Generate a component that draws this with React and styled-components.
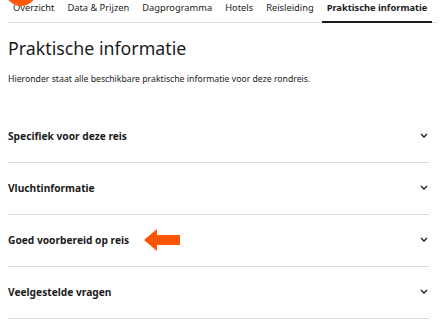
import React from "react";
import styled, { createGlobalStyle } from "styled-components";

const Global = createGlobalStyle`
  html, body { margin: 0; padding: 0; background: #fff; }
  body { font-family: "Noto Sans", "Open Sans", sans-serif; color: #1b1b1b; overflow: hidden; }
`;

const Page = styled.div`
  position: relative;
  width: 445px;
  height: 326px;
  padding: 0 8px;
  box-sizing: border-box;
  overflow: hidden;
`;

const Badge = styled.div`
  position: absolute;
  left: 5px;
  top: -26px;
  width: 32px;
  height: 32px;
  border-radius: 50%;
  background: #ff5a0a;
`;

const Tabs = styled.nav`
  display: flex;
  align-items: flex-end;
  gap: 3px;
  height: 23px;
  border-bottom: 1px solid #dcdcdc;
  box-sizing: border-box;
`;

const Tab = styled.div`
  padding: 0 5px 7px;
  font-size: 9.3px;
  line-height: 13px;
  font-weight: ${(p) => (p.$active ? 700 : 400)};
  color: #1b1b1b;
  white-space: nowrap;
  border-bottom: 2px solid ${(p) => (p.$active ? "#1b1b1b" : "transparent")};
  margin-bottom: -1px;
`;

const Title = styled.h1`
  margin: 13px 0 0;
  font-size: 17.8px;
  line-height: 24px;
  font-weight: 400;
`;

const Intro = styled.p`
  margin: 13px 0 0;
  font-size: 8.7px;
  line-height: 12px;
`;

const List = styled.div`
  margin-top: 26px;
  margin-right: 8px;
`;

const Row = styled.div`
  display: flex;
  align-items: center;
  height: 52px;
  padding-bottom: 2px;
  border-bottom: 1px solid #dcdcdc;
  box-sizing: border-box;
`;

const RowTitle = styled.span`
  font-size: 10.2px;
  font-weight: 700;
`;

const Arrow = styled.svg`
  margin-left: 15px;
  flex: none;
`;

const Chevron = styled.svg`
  margin-left: auto;
  margin-right: 1px;
  flex: none;
`;

const tabs = ["Overzicht", "Data & Prijzen", "Dagprogramma", "Hotels", "Reisleiding", "Praktische informatie"];
const rows = ["Specifiek voor deze reis", "Vluchtinformatie", "Goed voorbereid op reis", "Veelgestelde vragen"];

export default function App() {
  return (
    <>
      <Global />
      <Page>
        <Tabs>
          {tabs.map((t, i) => (
            <Tab key={t} $active={i === tabs.length - 1}>{t}</Tab>
          ))}
        </Tabs>
        <Badge />
        <Title>Praktische informatie</Title>
        <Intro>Hieronder staat alle beschikbare praktische informatie voor deze rondreis.</Intro>
        <List>
          {rows.map((r, i) => (
            <Row key={r}>
              <RowTitle>{r}</RowTitle>
              {i === 2 && (
                <Arrow width="36" height="22" viewBox="0 0 36 22">
                  <path d="M0 11 L13 0 L13 6 L36 6 L36 16 L13 16 L13 22 Z" fill="#ff5400" />
                </Arrow>
              )}
              <Chevron width="8" height="5" viewBox="0 0 8 5">
                <path d="M1 1 L4 4 L7 1" fill="none" stroke="#1b1b1b" strokeWidth="1.3" />
              </Chevron>
            </Row>
          ))}
        </List>
      </Page>
    </>
  );
}
